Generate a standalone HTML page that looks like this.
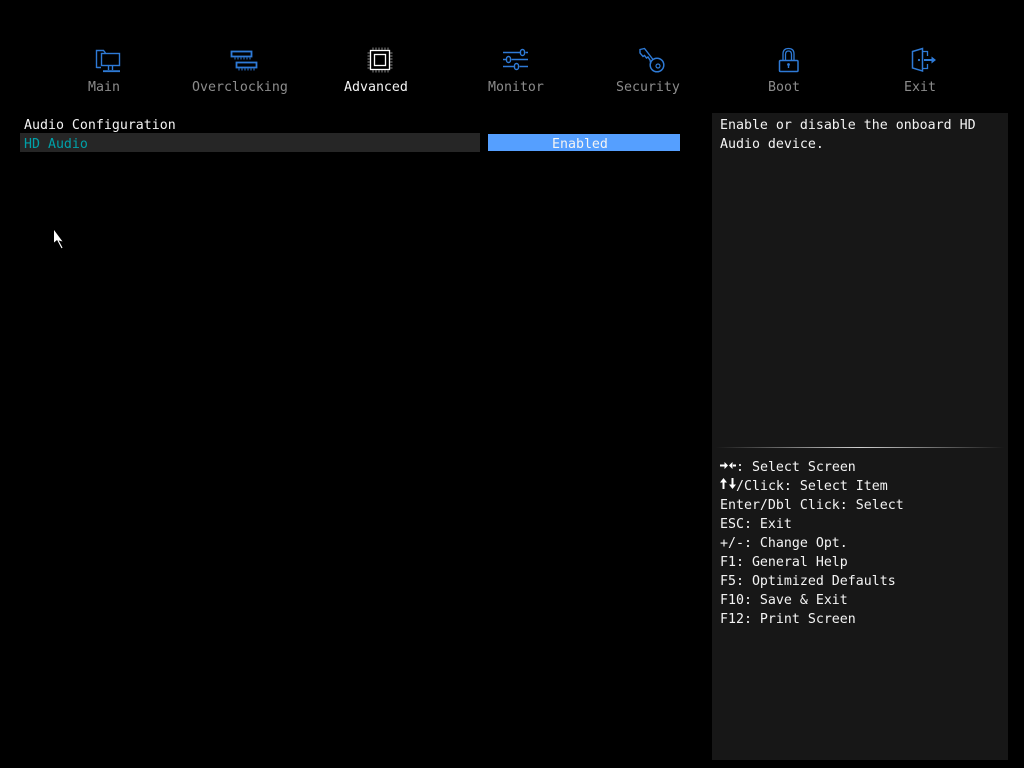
<!DOCTYPE html>
<html>
<head>
<meta charset="utf-8">
<style>
html,body{margin:0;padding:0;background:#000;width:1024px;height:768px;overflow:hidden}
#p{position:relative;width:1024px;height:768px;background:#000;overflow:hidden;font-family:"DejaVu Sans Mono","Liberation Mono",monospace;font-size:13.28px;color:#f4f4f4}
.t{position:absolute;white-space:pre;line-height:19px;height:19px}
.n{color:#8c8c8c;top:78px}
.b{position:absolute}
.sp{display:inline-block;width:16px}
svg{position:absolute;left:0;top:0}
</style>
</head>
<body>
<div id="p">
<div class="b" style="left:712px;top:113px;width:296px;height:647px;background:#171717"></div>
<div class="b" style="left:20px;top:133px;width:460px;height:19px;background:#262626"></div>
<div class="b" style="left:488px;top:134px;width:192px;height:17px;background:#559fff"></div>
<div class="b" style="left:716px;top:447px;width:288px;height:1px;background:linear-gradient(90deg,#171717,#d0d0d0 50%,#171717)"></div>

<svg width="1024" height="768" viewBox="0 0 1024 768" fill="none" stroke="#2e7ad6" stroke-width="1.4">
<path d="M96.500 68V50.500H103.500L105.500 53"/>
<rect x="101.500" y="53.500" width="18" height="12"/>
<path d="M96.500 67.500H101M108.500 66V70M112.500 66V70"/>
<path d="M103 71.200H120" stroke-width="1.800"/>
<rect x="231.500" y="51.500" width="20" height="5" stroke-width="1.800"/>
<path d="M235 57.500V59.500M238 57.500V59.500M241 57.500V59.500M244 57.500V59.500M247 57.500V59.500M250 57.500V59.500" stroke-width="1"/>
<rect x="236.500" y="62.500" width="20" height="5" stroke-width="1.800"/>
<path d="M239 68.500V70.500M242 68.500V70.500M245 68.500V70.500M248 68.500V70.500M251 68.500V70.500M254 68.500V70.500" stroke-width="1"/>
<path d="M503 52.500H520.500M525.500 52.500H528M503 59.500H506.500M511.500 59.500H528M503 66.500H514.500M519.500 66.500H528"/>
<rect x="520.500" y="49.500" width="4" height="6" rx="2"/>
<rect x="506.500" y="56.500" width="4" height="6" rx="2"/>
<rect x="514.500" y="63.500" width="4" height="6" rx="2"/>
<circle cx="657" cy="65" r="6.800" stroke-width="1.500"/>
<circle cx="658" cy="66" r="2" stroke-width="1.200"/>
<path d="M653 59.500L644.500 48.500L640 49.500V53L643 56.500L644.500 55.500L646.500 58L648 57L650 60L650.800 63.500" stroke-width="1.400"/>
<rect x="779.500" y="60.500" width="18.500" height="11" rx="1" stroke-width="1.500"/>
<path d="M783 60V54Q783 48.500 788.500 48.500Q794 48.500 794 54V60M785.500 60V54.500Q785.500 51 788.500 51Q791.500 51 791.500 54.500V60" stroke-width="1.300"/>
<circle cx="788.500" cy="64.500" r="1.400" fill="#2e7ad6" stroke="none"/>
<path d="M788.500 65V68"/>
<path d="M912.500 51.500L922.500 48.500V71L912.500 68Z" stroke-width="1.500"/>
<path d="M923 51.500H927.500V56M927.500 64V68.500H923" stroke-width="1.300"/>
<path d="M924 60H933" stroke-width="2"/>
<path d="M931.500 56.500L936 60L931.500 63.500Z" fill="#2e7ad6" stroke="none"/>
<circle cx="919" cy="60" r="1.100" fill="#2e7ad6" stroke="none"/>
<g stroke="#fff">
<rect x="370.500" y="50.500" width="19" height="19" stroke-width="1.300"/>
<rect x="374.500" y="54.500" width="11" height="11" stroke-width="1.300"/>
</g>
<path d="M373 50V47.500M376 50V47.500M379 50V47.500M382 50V47.500M385 50V47.500M388 50V47.500M373 70V72.500M376 70V72.500M379 70V72.500M382 70V72.500M385 70V72.500M388 70V72.500M370 53H367.500M370 56H367.500M370 59H367.500M370 62H367.500M370 65H367.500M370 68H367.500M390 53H392.500M390 56H392.500M390 59H392.500M390 62H392.500M390 65H392.500M390 68H392.500" stroke="#8a8a8a" stroke-width="1"/>
<path d="M54 230V242.500L57 240L62.500 241.500Z" fill="#fff" stroke="none"/>
<path d="M57.500 239.500L62 248" stroke="#fff" stroke-width="1.200"/>
<g stroke="#fff" stroke-width="2">
<path d="M720 465.500H725"/>
<path d="M733 465.500H736"/>
</g>
<path d="M724.500 462L728 465.500L724.500 469Z" fill="#fff" stroke="none"/>
<path d="M732.500 462L729 465.500L732.500 469Z" fill="#fff" stroke="none"/>
<path d="M723.500 482V489M732.500 478V485" stroke="#fff" stroke-width="2"/>
<path d="M720 482.500L723.500 478L727 482.500Z" fill="#fff" stroke="none"/>
<path d="M729 484.500L732.500 489L736 484.500Z" fill="#fff" stroke="none"/>
</svg>

<div class="t n" style="left:88px">Main</div>
<div class="t n" style="left:192px">Overclocking</div>
<div class="t" style="left:344px;top:78px">Advanced</div>
<div class="t n" style="left:488px">Monitor</div>
<div class="t n" style="left:616px">Security</div>
<div class="t n" style="left:768px">Boot</div>
<div class="t n" style="left:904px">Exit</div>

<div class="t" style="left:24px;top:116px">Audio Configuration</div>
<div class="t" style="left:24px;top:135px;color:#00a0a8">HD Audio</div>
<div class="t" style="left:552px;top:135px">Enabled</div>

<div class="t" style="left:720px;top:116px">Enable or disable the onboard HD</div>
<div class="t" style="left:720px;top:135px">Audio device.</div>

<div class="t" style="left:720px;top:458px"><span class="sp"></span>: Select Screen</div>
<div class="t" style="left:720px;top:477px"><span class="sp"></span>/Click: Select Item</div>
<div class="t" style="left:720px;top:496px">Enter/Dbl Click: Select</div>
<div class="t" style="left:720px;top:515px">ESC: Exit</div>
<div class="t" style="left:720px;top:534px">+/-: Change Opt.</div>
<div class="t" style="left:720px;top:553px">F1: General Help</div>
<div class="t" style="left:720px;top:572px">F5: Optimized Defaults</div>
<div class="t" style="left:720px;top:591px">F10: Save &amp; Exit</div>
<div class="t" style="left:720px;top:610px">F12: Print Screen</div>
</div>
</body>
</html>
